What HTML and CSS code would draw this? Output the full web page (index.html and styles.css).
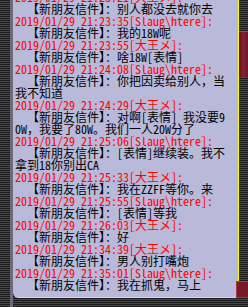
FILE: index.html
```html
<!DOCTYPE html>
<html lang="zh-CN">
<head>
    <meta charset="UTF-8">
    <title>新朋友信件</title>
    <link rel="stylesheet" href="styles.css">
</head>
<body>
    <div class="window">
        <div class="side"></div>
        <div class="panel">
            <div class="log">
                <p class="time">2019/01/29 21:23:21[大王メ]:</p>
                <p class="msg">  【新朋友信件】：别人都没去就你去</p>
                <p class="time">2019/01/29 21:23:35[Slaug\htere]:</p>
                <p class="msg">  【新朋友信件】：我的18W呢</p>
                <p class="time">2019/01/29 21:23:55[大王メ]:</p>
                <p class="msg">  【新朋友信件】：啥18W[表情]</p>
                <p class="time">2019/01/29 21:24:08[Slaug\htere]:</p>
                <p class="msg">  【新朋友信件】：你把因卖给别人，当我不知道</p>
                <p class="time">2019/01/29 21:24:29[大王メ]:</p>
                <p class="msg">  【新朋友信件】：对啊[表情] 我没要90W，我要了80W。我们一人20W分了</p>
                <p class="time">2019/01/29 21:25:06[Slaug\htere]:</p>
                <p class="msg">  【新朋友信件】：[表情]继续装。我不拿到18你别出CA</p>
                <p class="time">2019/01/29 21:25:33[大王メ]:</p>
                <p class="msg">  【新朋友信件】：我在ZZFF等你。来</p>
                <p class="time">2019/01/29 21:25:55[Slaug\htere]:</p>
                <p class="msg">  【新朋友信件】：[表情]等我</p>
                <p class="time">2019/01/29 21:26:03[大王メ]:</p>
                <p class="msg">  【新朋友信件】：好</p>
                <p class="time">2019/01/29 21:34:39[大王メ]:</p>
                <p class="msg">  【新朋友信件】：男人别打嘴炮</p>
                <p class="time">2019/01/29 21:35:01[Slaug\htere]:</p>
                <p class="msg">  【新朋友信件】：我在抓鬼，马上</p>
            </div>
        </div>
        <div class="scrollbar">
            <div class="thumb"></div>
            <div class="btn"></div>
        </div>
    </div>
</body>
</html>
```

FILE: styles.css
```css
body {
    margin: 0;
    background: repeating-linear-gradient(to bottom, #1c1c1c 0 1px, #474747 1px 2px);
    font-family: "Noto Sans Mono CJK SC", "Liberation Mono", monospace;
    font-size: 12px;
}
.window {
    display: flex;
    width: 248px;
    height: 307px;
    overflow: hidden;
}
.side {
    width: 10px;
    flex: none;
    border-right: 3px solid #6c6c78; /* borda cinza do painel */
}
.panel {
    width: 225px;
    height: 298px;
    flex: none;
    background-color: #b9b9d9; /* lilas */
    border-bottom: 1px solid #d6d6ea;
    border-bottom-left-radius: 6px;
    overflow: hidden;
    box-sizing: border-box;
}
.log {
    margin-top: -9px;
    padding-left: 2px;
    width: 216px;
}
.log p {
    margin: 0;
    line-height: 12px;
    white-space: pre-wrap;
    word-break: break-all;
}
.time {
    color: #ff0000;
}
.msg {
    color: #000;
}
.scrollbar {
    position: relative;
    width: 10px;
    flex: none;
    border-left: 1px solid #ffff00;
    height: 290px;
}
.thumb {
    margin-top: 31px;
    height: 45px;
    background: linear-gradient(to right, #5a0f1c, #8c1f33 40%, #6a1424);
    border-top: 1px solid #c04050;
}
.btn {
    position: absolute;
    left: -3px;
    bottom: -8px;
    width: 13px;
    height: 15px;
    background-color: #7a1828;
    border: 1px solid #a83848;
}
```
